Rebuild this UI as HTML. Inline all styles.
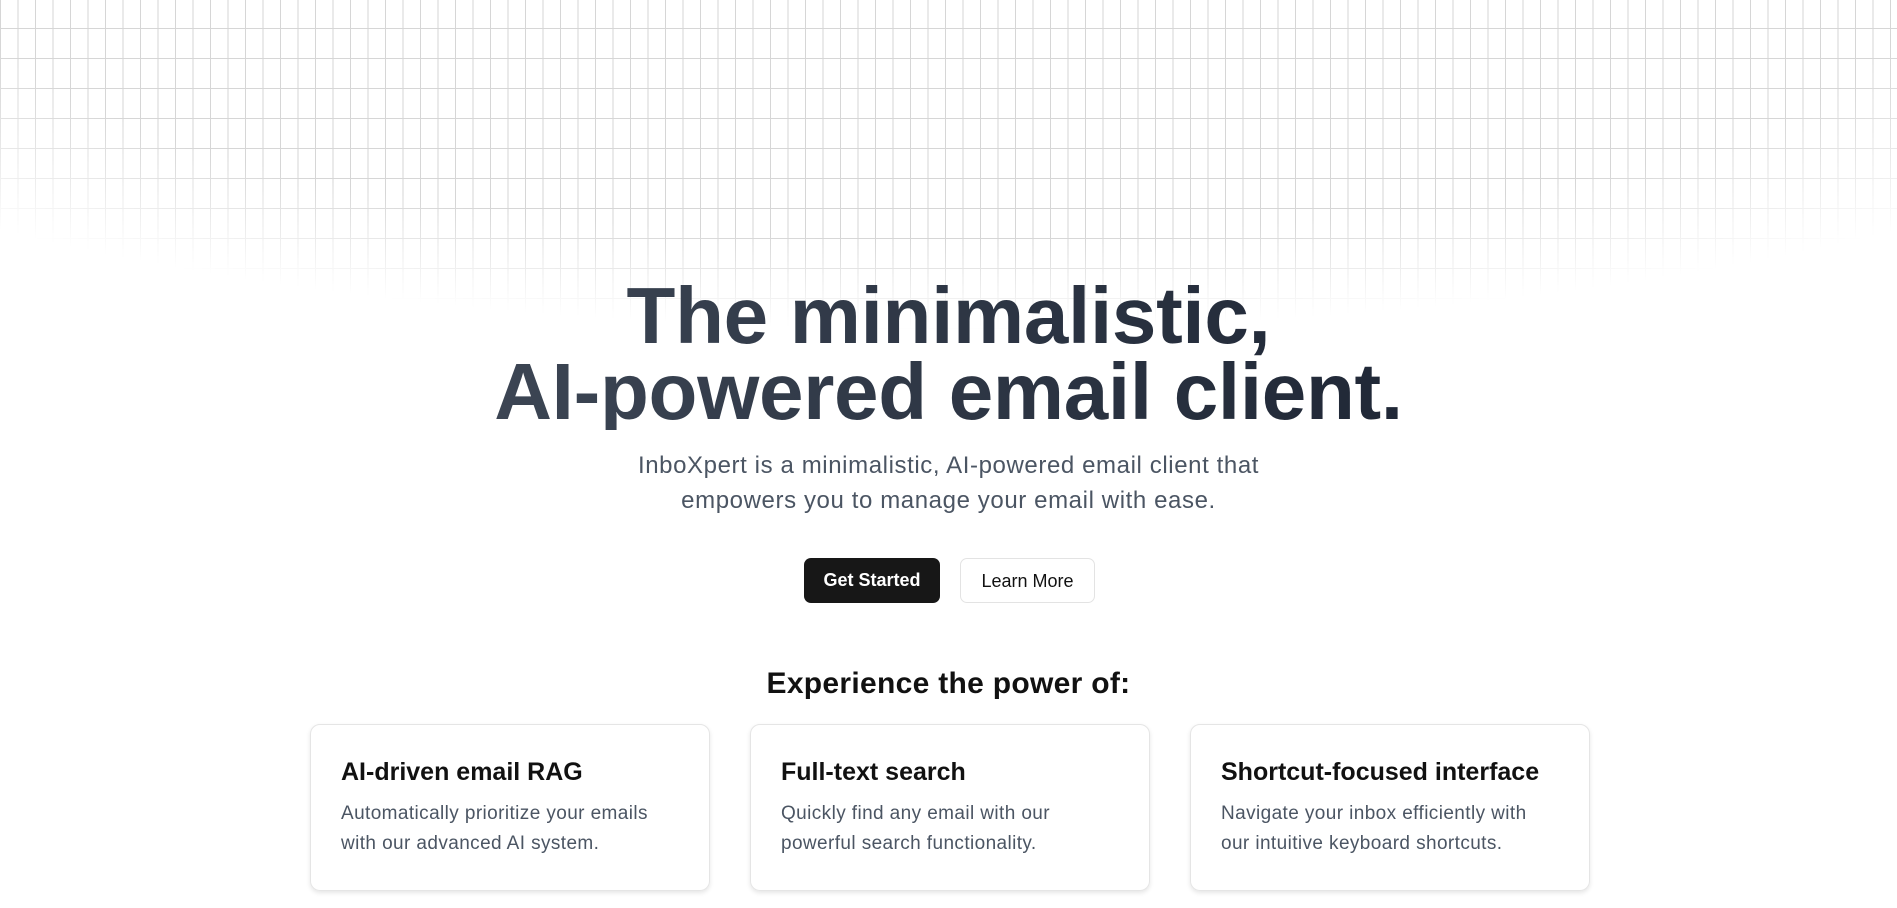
<!DOCTYPE html>
<html><head><style>
body{margin:0;width:1897px;height:908px;overflow:hidden;background:#fff;font-family:"Liberation Sans",sans-serif;position:relative}
.grid{position:absolute;left:0;top:0;width:1897px;height:330px;
background-image:linear-gradient(to right,#d6d6d6 1px,transparent 1px),linear-gradient(to bottom,#d6d6d6 1px,transparent 1px);
background-size:17.5px 30px;background-position:0 -2px;
-webkit-mask-image:radial-gradient(ellipse 70% 100% at 50% 0%,#000 72%,transparent 100%);
mask-image:radial-gradient(ellipse 70% 100% at 50% 0%,#000 72%,transparent 100%)}
h1{position:absolute;left:0;right:0;top:278px;margin:0;text-align:center;font-size:80px;line-height:76px;font-weight:bold;letter-spacing:-0.3px;
background:linear-gradient(90deg,#4b5563,#111827);-webkit-background-clip:text;background-clip:text;color:transparent}
.sub{position:absolute;left:0;right:0;top:448px;text-align:center;font-size:24px;line-height:35px;color:#4b5563;letter-spacing:0.6px}
.btn{position:absolute;top:558px;height:45px;border-radius:7px;font-size:18px;line-height:45px;text-align:center;box-sizing:border-box}
.b1{left:804px;width:136px;background:#171717;color:#fff;font-weight:bold}
.b2{left:960px;width:135px;border:1px solid #e3e3e3;color:#111}
h2{position:absolute;left:0;right:0;top:667px;margin:0;text-align:center;font-size:30px;font-weight:bold;color:#111;letter-spacing:0.3px}
.card{position:absolute;top:724px;width:400px;height:167px;border:1px solid #e5e5e5;border-radius:10px;box-sizing:border-box;box-shadow:0 2px 5px rgba(0,0,0,.1);padding:30px 30px}
.card h3{margin:0;font-size:25px;font-weight:bold;color:#111;line-height:34px}
.card p{margin:10px 0 0;font-size:19px;line-height:30px;color:#4b5563;letter-spacing:0.4px}
</style></head><body>
<div class="grid"></div>
<h1>The minimalistic,<br>AI-powered email client.</h1>
<div class="sub">InboXpert is a minimalistic, AI-powered email client that<br>empowers you to manage your email with ease.</div>
<div class="btn b1">Get Started</div>
<div class="btn b2">Learn More</div>
<h2>Experience the power of:</h2>
<div class="card" style="left:310px"><h3>AI-driven email RAG</h3><p>Automatically prioritize your emails<br>with our advanced AI system.</p></div>
<div class="card" style="left:750px"><h3>Full-text search</h3><p>Quickly find any email with our<br>powerful search functionality.</p></div>
<div class="card" style="left:1190px"><h3>Shortcut-focused interface</h3><p>Navigate your inbox efficiently with<br>our intuitive keyboard shortcuts.</p></div>
</body></html>
